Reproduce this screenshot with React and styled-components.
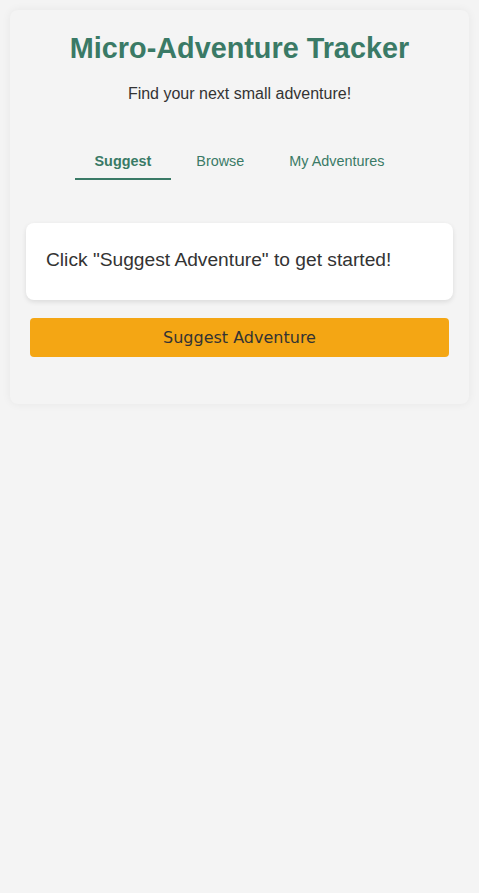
import React, { useState } from "react";
import styled, { createGlobalStyle } from "styled-components";

const Global = createGlobalStyle`
  html, body { margin: 0; padding: 0; background: #f4f4f4; }
  body { font-family: "Liberation Sans", Arial, sans-serif; color: #333; }
`;

const Page = styled.div`
  padding: 10px;
`;

const Card = styled.main`
  background: #f4f4f4;
  border-radius: 8px;
  box-shadow: 0 0 10px rgba(0, 0, 0, 0.06);
  padding: 20px 20px 47px;
`;

const Title = styled.h1`
  margin: 0;
  text-align: center;
  font-size: 28.8px;
  line-height: 36px;
  font-weight: 700;
  color: #3a7a66;
`;

const Subtitle = styled.p`
  margin: 19px 0 0;
  text-align: center;
  font-size: 16px;
  line-height: 18px;
  color: #333;
`;

const Tabs = styled.nav`
  display: flex;
  justify-content: center;
  gap: 5px;
  margin-top: 40px;
`;

const Tab = styled.button`
  background: none;
  border: none;
  border-bottom: 2px solid ${(p) => (p.$active ? "#3a7a66" : "transparent")};
  padding: 10px 20px 8px;
  font-family: "Liberation Sans", Arial, sans-serif;
  font-size: 14.4px;
  line-height: 17px;
  font-weight: ${(p) => (p.$active ? 700 : 400)};
  color: #3a7a66;
  cursor: pointer;
`;

const Message = styled.section`
  margin: 43px -4px 0;
  background: #fff;
  border-radius: 8px;
  box-shadow: 0 2px 5px rgba(0, 0, 0, 0.1);
  padding: 22px 20px 26px;
`;

const MessageText = styled.p`
  margin: 0;
  font-size: 19.2px;
  line-height: 29px;
  color: #333;
`;

const Button = styled.button`
  display: block;
  width: 100%;
  margin-top: 18px;
  height: 39px;
  background: #f4a614;
  border: none;
  border-radius: 4px;
  font-family: "DejaVu Sans", sans-serif;
  font-size: 16px;
  color: #333;
  cursor: pointer;
`;

export default function App() {
  const [tab, setTab] = useState("suggest");
  const tabs = [
    ["suggest", "Suggest"],
    ["browse", "Browse"],
    ["mine", "My Adventures"],
  ];
  return (
    <>
      <Global />
      <Page>
        <Card>
          <Title>Micro-Adventure Tracker</Title>
          <Subtitle>Find your next small adventure!</Subtitle>
          <Tabs>
            {tabs.map(([k, label]) => (
              <Tab key={k} $active={tab === k} onClick={() => setTab(k)}>
                {label}
              </Tab>
            ))}
          </Tabs>
          <Message>
            <MessageText>Click "Suggest Adventure" to get started!</MessageText>
          </Message>
          <Button>Suggest Adventure</Button>
        </Card>
      </Page>
    </>
  );
}
